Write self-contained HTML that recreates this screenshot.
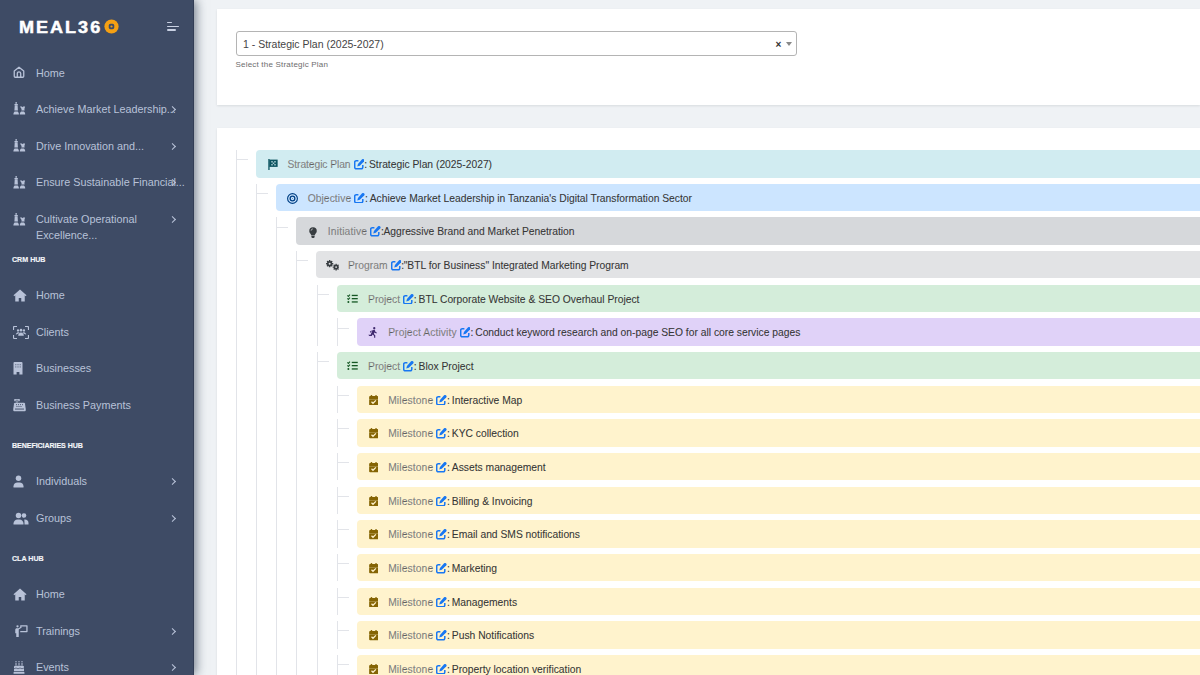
<!DOCTYPE html>
<html><head><meta charset="utf-8"><style>
*{box-sizing:border-box}
html,body{margin:0;padding:0}
body{width:1200px;height:675px;overflow:hidden;position:relative;background:#eff2f5;font-family:"Liberation Sans",sans-serif}
.a{position:absolute;white-space:nowrap}
#sb{position:absolute;left:0;top:0;width:193px;height:675px;background:#3e4b65;box-shadow:1px 0 0 #323d55, 3px 0 10px rgba(40,55,75,.62)}
.si{position:absolute;left:36px;font-size:10.8px;line-height:16px;color:#b8c2d8;white-space:nowrap}
.sic{position:absolute;left:13px;line-height:0}
.sh{position:absolute;left:12px;font-size:7.1px;font-weight:bold;line-height:10px;color:#eef1f6;white-space:nowrap;-webkit-text-stroke:.15px #fff}
.chev{position:absolute;left:169.5px;width:4.8px;height:4.8px;border-right:1.5px solid #b8c2d8;border-top:1.5px solid #b8c2d8;transform:rotate(45deg)}
.card{position:absolute;left:217px;width:983px;background:#fff}
.vl{position:absolute;width:1px;background:#e2e4e9}
.hl{position:absolute;height:1px;width:12px;background:#e2e4e9}
.row{position:absolute;height:27.5px;border-radius:4px;right:-10px}
.ric{position:absolute;left:11.5px;top:8px;line-height:0}
.rt{position:absolute;left:31.5px;top:0;line-height:27.5px;font-size:10.3px;color:#363636;white-space:nowrap;padding-top:1px;-webkit-text-stroke:.07px #363636}
.lab{color:#868686}
</style></head><body>

<div id="sb">
<div class="a" style="left:18.6px;top:16px;font-size:17.2px;font-weight:bold;letter-spacing:1.9px;color:#fff;line-height:22px;-webkit-text-stroke:.5px #fff;transform:scaleX(1.05);transform-origin:0 0">MEAL36</div>
<svg class="a" style="left:103.8px;top:18.8px" width="15" height="15" viewBox="0 0 30 30"><circle cx="15" cy="15" r="14.2" fill="#f5a013"/><rect x="9.5" y="9.5" width="11" height="11" rx="3.5" fill="#3e4b65"/><circle cx="15" cy="15" r="2.2" fill="#f5a013"/></svg>
<div class="a" style="left:166.8px;top:21.7px;width:5.4px;height:1.5px;background:#c9d1e3;border-radius:1px"></div>
<div class="a" style="left:166.8px;top:25.5px;width:12.6px;height:1.5px;background:#c9d1e3;border-radius:1px"></div>
<div class="a" style="left:166.8px;top:29.2px;width:9.2px;height:1.5px;background:#c9d1e3;border-radius:1px"></div>
<div class="si" style="top:64.50px">Home</div>
<div class="sic" style="top:66.30px"><svg width="12" height="12" viewBox="0 0 24 24"><path d="M2.5 10.2L12 2.3l9.5 7.9V20.5a2 2 0 0 1-2 2h-15a2 2 0 0 1-2-2z M8.6 22.2V15a3.4 3.4 0 0 1 6.8 0v7.2" fill="none" stroke="#b8c2d8" stroke-width="2.6" stroke-linejoin="round"/></svg></div>
<div class="si" style="top:100.50px">Achieve Market Leadership...</div>
<div class="sic" style="top:102.30px"><svg width="13" height="13" viewBox="0 0 26 26"><g fill="#b8c2d8"><circle cx="6.3" cy="1.9" r="1.7"/><rect x="2.8" y="3.8" width="7" height="2.6" rx=".8"/><path d="M3.5 6.6h5.6l.7 10.6H2.8z"/><path d="M.8 25c0-2.6 1-5.6 2.6-6.2h5.8c1.6.6 2.6 3.6 2.6 6.2z"/><path d="M13.8 8.8h4l1.2 1.6 1.2-1.6h4l-1.4 5.2.4 3.2h-6.4l.4-3.2z"/><path d="M13.6 25c0-2.6 1-5.6 2.6-6.2h5.6c1.6.6 2.6 3.6 2.6 6.2z"/></g></svg></div>
<div class="chev" style="top:106.50px"></div>
<div class="si" style="top:137.60px">Drive Innovation and...</div>
<div class="sic" style="top:139.40px"><svg width="13" height="13" viewBox="0 0 26 26"><g fill="#b8c2d8"><circle cx="6.3" cy="1.9" r="1.7"/><rect x="2.8" y="3.8" width="7" height="2.6" rx=".8"/><path d="M3.5 6.6h5.6l.7 10.6H2.8z"/><path d="M.8 25c0-2.6 1-5.6 2.6-6.2h5.8c1.6.6 2.6 3.6 2.6 6.2z"/><path d="M13.8 8.8h4l1.2 1.6 1.2-1.6h4l-1.4 5.2.4 3.2h-6.4l.4-3.2z"/><path d="M13.6 25c0-2.6 1-5.6 2.6-6.2h5.6c1.6.6 2.6 3.6 2.6 6.2z"/></g></svg></div>
<div class="chev" style="top:143.60px"></div>
<div class="si" style="top:173.90px">Ensure Sustainable Financial...</div>
<div class="sic" style="top:175.70px"><svg width="13" height="13" viewBox="0 0 26 26"><g fill="#b8c2d8"><circle cx="6.3" cy="1.9" r="1.7"/><rect x="2.8" y="3.8" width="7" height="2.6" rx=".8"/><path d="M3.5 6.6h5.6l.7 10.6H2.8z"/><path d="M.8 25c0-2.6 1-5.6 2.6-6.2h5.8c1.6.6 2.6 3.6 2.6 6.2z"/><path d="M13.8 8.8h4l1.2 1.6 1.2-1.6h4l-1.4 5.2.4 3.2h-6.4l.4-3.2z"/><path d="M13.6 25c0-2.6 1-5.6 2.6-6.2h5.6c1.6.6 2.6 3.6 2.6 6.2z"/></g></svg></div>
<div class="chev" style="top:179.90px"></div>
<div class="si" style="top:210.70px">Cultivate Operational<br>Excellence...</div>
<div class="sic" style="top:212.50px"><svg width="13" height="13" viewBox="0 0 26 26"><g fill="#b8c2d8"><circle cx="6.3" cy="1.9" r="1.7"/><rect x="2.8" y="3.8" width="7" height="2.6" rx=".8"/><path d="M3.5 6.6h5.6l.7 10.6H2.8z"/><path d="M.8 25c0-2.6 1-5.6 2.6-6.2h5.8c1.6.6 2.6 3.6 2.6 6.2z"/><path d="M13.8 8.8h4l1.2 1.6 1.2-1.6h4l-1.4 5.2.4 3.2h-6.4l.4-3.2z"/><path d="M13.6 25c0-2.6 1-5.6 2.6-6.2h5.6c1.6.6 2.6 3.6 2.6 6.2z"/></g></svg></div>
<div class="chev" style="top:216.70px"></div>
<div class="sh" style="top:255.30px;letter-spacing:0px">CRM HUB</div>
<div class="si" style="top:287.10px">Home</div>
<div class="sic" style="top:288.90px"><svg width="14" height="13" viewBox="0 0 28 26"><path d="M14 1L1 12.5l1.6 1.8L4.5 12.7V25h7v-7h5v7h7V12.7l1.9 1.6 1.6-1.8z" fill="#b8c2d8"/></svg></div>
<div class="si" style="top:323.90px">Clients</div>
<div class="sic" style="top:325.70px"><svg width="16" height="13" viewBox="0 0 32 26"><path d="M1 8V3a2 2 0 0 1 2-2h5M24 1h5a2 2 0 0 1 2 2v5M31 18v5a2 2 0 0 1-2 2h-5M8 25H3a2 2 0 0 1-2-2v-5" fill="none" stroke="#b8c2d8" stroke-width="2.4"/><circle cx="10" cy="9" r="2.3" fill="#b8c2d8"/><circle cx="16" cy="8.3" r="2.6" fill="#b8c2d8"/><circle cx="22" cy="9" r="2.3" fill="#b8c2d8"/><path d="M6.5 17c0-2.5 1.5-4 3.5-4s3 1 3 1M25.5 17c0-2.5-1.5-4-3.5-4s-3 1-3 1M11 19c0-3.3 2.2-5.5 5-5.5s5 2.2 5 5.5z" fill="#b8c2d8" stroke="#b8c2d8" stroke-width="1"/></svg></div>
<div class="si" style="top:360.20px">Businesses</div>
<div class="sic" style="top:362.00px"><svg width="10" height="13" viewBox="0 0 20 26"><path d="M1 2a2 2 0 0 1 2-2h14a2 2 0 0 1 2 2v23h-6.2v-5h-5.6v5H1z" fill="#b8c2d8"/><g fill="#3e4b65"><rect x="4.6" y="4.6" width="2" height="1.8"/><rect x="9" y="4.6" width="2" height="1.8"/><rect x="13.4" y="4.6" width="2" height="1.8"/><rect x="4.6" y="9" width="2" height="1.8"/><rect x="9" y="9" width="2" height="1.8"/><rect x="13.4" y="9" width="2" height="1.8"/></g></svg></div>
<div class="si" style="top:397.00px">Business Payments</div>
<div class="sic" style="top:398.80px"><svg width="13" height="13" viewBox="0 0 26 26"><rect x="2.5" y="0" width="11" height="4.6" rx="1.2" fill="#b8c2d8"/><rect x="5" y="1.6" width="6" height="1.4" fill="#3e4b65"/><rect x="7" y="4.6" width="2" height="3" fill="#b8c2d8"/><path d="M4 7.5h18c1 0 1.6.6 1.9 1.5L25.5 20v2.5a2 2 0 0 1-2 2H2.5a2 2 0 0 1-2-2V20L2.1 9c.3-.9.9-1.5 1.9-1.5z" fill="#b8c2d8"/><g fill="#3e4b65"><rect x="6" y="10.5" width="2" height="1.8"/><rect x="10" y="10.5" width="2" height="1.8"/><rect x="14" y="10.5" width="2" height="1.8"/><rect x="18" y="10.5" width="2" height="1.8"/><rect x="7" y="14" width="2" height="1.8"/><rect x="11" y="14" width="2" height="1.8"/><rect x="15" y="14" width="2" height="1.8"/><rect x="4" y="19.2" width="18" height="1.8"/></g></svg></div>
<div class="sh" style="top:441.20px;letter-spacing:-0.08px">BENEFICIARIES HUB</div>
<div class="si" style="top:472.90px">Individuals</div>
<div class="sic" style="top:474.70px"><svg width="11" height="13" viewBox="0 0 22 26"><circle cx="11" cy="6.5" r="5.5" fill="#b8c2d8"/><path d="M1 25v-2.5C1 18 4.5 15 9 15h4c4.5 0 8 3 8 7.5V25z" fill="#b8c2d8"/></svg></div>
<div class="chev" style="top:478.90px"></div>
<div class="si" style="top:509.90px">Groups</div>
<div class="sic" style="top:511.70px"><svg width="16" height="13" viewBox="0 0 32 26"><circle cx="11" cy="7" r="5.5" fill="#b8c2d8"/><path d="M1 25v-2c0-4.5 3.5-8 8-8h4c4.5 0 8 3.5 8 8v2z" fill="#b8c2d8"/><path d="M20 2.2a5.5 5.5 0 0 1 0 9.6A6.5 6.5 0 0 0 20 2.2z" fill="#b8c2d8"/><circle cx="22" cy="7" r="4.6" fill="#b8c2d8"/><path d="M22.5 15h1.5c4 0 7 3 7 7v3h-8v-3c0-2.7-.3-5-0.5-7z" fill="#b8c2d8"/></svg></div>
<div class="chev" style="top:515.90px"></div>
<div class="sh" style="top:554.20px;letter-spacing:0px">CLA HUB</div>
<div class="si" style="top:585.90px">Home</div>
<div class="sic" style="top:587.70px"><svg width="14" height="13" viewBox="0 0 28 26"><path d="M14 1L1 12.5l1.6 1.8L4.5 12.7V25h7v-7h5v7h7V12.7l1.9 1.6 1.6-1.8z" fill="#b8c2d8"/></svg></div>
<div class="si" style="top:622.90px">Trainings</div>
<div class="sic" style="top:624.70px"><svg width="16" height="13" viewBox="0 0 32 26"><circle cx="9" cy="2.6" r="2.3" fill="#b8c2d8"/><path d="M4.5 9.5c0-2 1.3-3.2 3.2-3.2h3.3l4.8-2.6 1 1.8-5.3 3.4V24H6.5v-7.5H4.5z" fill="#b8c2d8"/><path d="M14.5 0.5h13.5a1.2 1.2 0 0 1 1.2 1.2v11.5a1.2 1.2 0 0 1-1.2 1.2H14.5v-2.6h12.1V3.1H16.9v2.2h-2.4z" fill="#b8c2d8"/></svg></div>
<div class="chev" style="top:628.90px"></div>
<div class="si" style="top:659.20px">Events</div>
<div class="sic" style="top:661.00px"><svg width="12" height="13" viewBox="0 0 24 26"><g fill="#b8c2d8"><circle cx="6" cy="1.5" r="1.3"/><circle cx="12" cy="1.5" r="1.3"/><circle cx="18" cy="1.5" r="1.3"/><rect x="5" y="4" width="2" height="5"/><rect x="11" y="4" width="2" height="5"/><rect x="17" y="4" width="2" height="5"/><path d="M2 12a2.5 2.5 0 0 1 2.5-2.5h15A2.5 2.5 0 0 1 22 12v8.5H2z"/><rect x="1" y="21.8" width="22" height="3.6" rx="1"/></g><path d="M2 15.5c2 0 2-1.5 4-1.5s2 1.5 4 1.5 2-1.5 4-1.5 2 1.5 4 1.5 2-1.5 4-1.5" fill="none" stroke="#3e4b65" stroke-width="1.4"/></svg></div>
<div class="chev" style="top:665.20px"></div>
</div>
<div class="card" style="top:9px;height:96px;box-shadow:0 1px 2px rgba(56,65,74,.12)"></div>
<div class="card" style="top:127.6px;height:560px;box-shadow:0 1px 2px rgba(56,65,74,.12)"></div>
<div class="a" style="left:235.5px;top:31.2px;width:561.5px;height:24.6px;border:1px solid #b4b4b4;border-radius:3px;background:#fff"></div>
<div class="a" style="left:243px;top:35.5px;font-size:10.5px;line-height:16px;color:#444">1 - Strategic Plan (2025-2027)</div>
<div class="a" style="left:775.5px;top:37px;font-size:10px;line-height:16px;color:#333;font-weight:bold">&#215;</div>
<div class="a" style="left:786.2px;top:42px;width:0;height:0;border-left:3.5px solid transparent;border-right:3.5px solid transparent;border-top:4px solid #888"></div>
<div class="a" style="left:235.5px;top:60.3px;font-size:8px;line-height:10px;color:#6d6d6d;letter-spacing:.2px">Select the Strategic Plan</div>
<div class="vl" style="left:236.00px;top:150.00px;height:550.00px"></div>
<div class="hl" style="left:236.00px;top:159.20px"></div>
<div class="row" style="left:256.00px;top:150.00px;background:#d1ecf1"><div class="ric" style="left:11.7px;top:9.2px"><svg width="10" height="11" viewBox="0 0 20 22"><path d="M.6 0h2.6v22H.6z" fill="#0c5460"/><path d="M2.5 1.2h16.8v14.6H2.5z" fill="#0c5460"/><path d="M6.5 4h3v3h-3zM12.5 4h3v3h-3zM9.5 7h3v3h-3zM6.5 10h3v3h-3zM12.5 10h3v3h-3z" fill="#d1ecf1" opacity=".75"/></svg></div><div class="rt"><span class="lab" style="letter-spacing:-0.08px">Strategic Plan</span> <svg width="10.5" height="10.5" viewBox="0 0 21 21" style="vertical-align:-1.6px;margin-left:0.3px;margin-right:0.1px"><path d="M8.8 3.4H4.4a3 3 0 0 0-3 3v10.2a3 3 0 0 0 3 3h10.2a3 3 0 0 0 3-3v-4.4" fill="none" stroke="#1877f2" stroke-width="3"/><path d="M16.2 0.6a2.6 2.6 0 0 1 3.6 0l.6.6a2.6 2.6 0 0 1 0 3.6L11.6 13.6 6.5 15l1.4-5.1z" fill="#1877f2"/></svg><span style="letter-spacing:-.5px">: </span>Strategic Plan (2025-2027)</div></div>
<div class="vl" style="left:256.15px;top:183.66px;height:516.34px"></div>
<div class="hl" style="left:256.15px;top:192.86px"></div>
<div class="row" style="left:276.13px;top:183.66px;background:#cce5ff"><div class="ric" style="left:10.9px;top:9.0px"><svg width="11" height="11" viewBox="0 0 22 22"><circle cx="11" cy="11" r="9.8" fill="none" stroke="#004085" stroke-width="2.3"/><circle cx="11" cy="11" r="4.7" fill="none" stroke="#004085" stroke-width="2.7"/><circle cx="11" cy="11" r="1" fill="#004085" opacity=".6"/></svg></div><div class="rt"><span class="lab" style="letter-spacing:0.07px">Objective</span> <svg width="10.5" height="10.5" viewBox="0 0 21 21" style="vertical-align:-1.6px;margin-left:0.3px;margin-right:0.1px"><path d="M8.8 3.4H4.4a3 3 0 0 0-3 3v10.2a3 3 0 0 0 3 3h10.2a3 3 0 0 0 3-3v-4.4" fill="none" stroke="#1877f2" stroke-width="3"/><path d="M16.2 0.6a2.6 2.6 0 0 1 3.6 0l.6.6a2.6 2.6 0 0 1 0 3.6L11.6 13.6 6.5 15l1.4-5.1z" fill="#1877f2"/></svg><span style="letter-spacing:-.5px">: </span>Achieve Market Leadership in Tanzania's Digital Transformation Sector</div></div>
<div class="vl" style="left:276.30px;top:217.32px;height:482.68px"></div>
<div class="hl" style="left:276.30px;top:226.52px"></div>
<div class="row" style="left:296.26px;top:217.32px;background:#d6d8db"><div class="ric" style="left:12.4px;top:9.3px"><svg width="8" height="11" viewBox="0 0 16 22"><path d="M8 0.5a7.5 7.5 0 0 1 7.5 7.5c0 2.8-1.5 4.3-2.7 5.8-.9 1.1-1.3 2.2-1.4 3.2H4.6c-.1-1-.5-2.1-1.4-3.2C2 12.3.5 10.8.5 8A7.5 7.5 0 0 1 8 .5z" fill="#383d41"/><path d="M4.8 18h6.4v1.5a2.5 2.5 0 0 1-2.5 2.5H7.3a2.5 2.5 0 0 1-2.5-2.5z" fill="#383d41"/><path d="M4.2 7.5A3.8 3.8 0 0 1 8 3.7" stroke="#d6d8db" stroke-width="1.3" fill="none"/></svg></div><div class="rt"><span class="lab" style="letter-spacing:0.17px">Initiative</span> <svg width="10.5" height="10.5" viewBox="0 0 21 21" style="vertical-align:-1.6px;margin-left:0.3px;margin-right:0.1px"><path d="M8.8 3.4H4.4a3 3 0 0 0-3 3v10.2a3 3 0 0 0 3 3h10.2a3 3 0 0 0 3-3v-4.4" fill="none" stroke="#1877f2" stroke-width="3"/><path d="M16.2 0.6a2.6 2.6 0 0 1 3.6 0l.6.6a2.6 2.6 0 0 1 0 3.6L11.6 13.6 6.5 15l1.4-5.1z" fill="#1877f2"/></svg><span style="letter-spacing:-.5px">:</span>Aggressive Brand and Market Penetration</div></div>
<div class="vl" style="left:296.45px;top:250.98px;height:449.02px"></div>
<div class="hl" style="left:296.45px;top:260.18px"></div>
<div class="row" style="left:316.39px;top:250.98px;background:#e2e3e5"><div class="ric" style="left:9.4px;top:9.4px"><svg width="13.5" height="10.5" viewBox="0 0 27 21"><g fill="#383d41"><circle cx="7.3" cy="7.3" r="5.2"/><rect x="5.8" y="0" width="3" height="14.6" rx=".6"/><rect x="0" y="5.8" width="14.6" height="3" rx=".6"/><rect x="5.8" y="0" width="3" height="14.6" rx=".6" transform="rotate(45 7.3 7.3)"/><rect x="5.8" y="0" width="3" height="14.6" rx=".6" transform="rotate(-45 7.3 7.3)"/></g><circle cx="7.3" cy="7.3" r="2" fill="#e2e3e5"/><g fill="#383d41"><circle cx="20.2" cy="14.2" r="4.7"/><rect x="18.8" y="7.4" width="2.8" height="13.6" rx=".6"/><rect x="13.4" y="12.8" width="13.6" height="2.8" rx=".6"/><rect x="18.8" y="7.4" width="2.8" height="13.6" rx=".6" transform="rotate(45 20.2 14.2)"/><rect x="18.8" y="7.4" width="2.8" height="13.6" rx=".6" transform="rotate(-45 20.2 14.2)"/></g><circle cx="20.2" cy="14.2" r="1.8" fill="#e2e3e5"/></svg></div><div class="rt"><span class="lab" style="letter-spacing:0.03px">Program</span> <svg width="10.5" height="10.5" viewBox="0 0 21 21" style="vertical-align:-1.6px;margin-left:0.3px;margin-right:0.1px"><path d="M8.8 3.4H4.4a3 3 0 0 0-3 3v10.2a3 3 0 0 0 3 3h10.2a3 3 0 0 0 3-3v-4.4" fill="none" stroke="#1877f2" stroke-width="3"/><path d="M16.2 0.6a2.6 2.6 0 0 1 3.6 0l.6.6a2.6 2.6 0 0 1 0 3.6L11.6 13.6 6.5 15l1.4-5.1z" fill="#1877f2"/></svg><span style="letter-spacing:-.5px">:</span>"BTL for Business" Integrated Marketing Program</div></div>
<div class="vl" style="left:316.60px;top:284.64px;height:61.16px"></div>
<div class="hl" style="left:316.60px;top:293.84px"></div>
<div class="row" style="left:336.52px;top:284.64px;background:#d4edda"><div class="ric" style="left:10.7px;top:9.2px"><svg width="11" height="9.5" viewBox="0 0 22 19"><path d="M.8 2.8l1.9 1.9L6 1.2M.8 8.8l1.9 1.9L6 7.2" fill="none" stroke="#155724" stroke-width="2.2"/><circle cx="2.7" cy="16" r="2" fill="#155724"/><rect x="9.5" y="1.6" width="12" height="2.6" fill="#155724"/><rect x="9.5" y="8" width="12" height="2.6" fill="#155724"/><rect x="9.5" y="14.6" width="12" height="2.6" fill="#155724"/></svg></div><div class="rt"><span class="lab" style="letter-spacing:0.0px">Project</span> <svg width="10.5" height="10.5" viewBox="0 0 21 21" style="vertical-align:-1.6px;margin-left:0.3px;margin-right:0.1px"><path d="M8.8 3.4H4.4a3 3 0 0 0-3 3v10.2a3 3 0 0 0 3 3h10.2a3 3 0 0 0 3-3v-4.4" fill="none" stroke="#1877f2" stroke-width="3"/><path d="M16.2 0.6a2.6 2.6 0 0 1 3.6 0l.6.6a2.6 2.6 0 0 1 0 3.6L11.6 13.6 6.5 15l1.4-5.1z" fill="#1877f2"/></svg><span style="letter-spacing:-.5px">: </span>BTL Corporate Website &amp; SEO Overhaul Project</div></div>
<div class="vl" style="left:336.75px;top:318.30px;height:27.50px"></div>
<div class="hl" style="left:336.75px;top:327.50px"></div>
<div class="row" style="left:356.65px;top:318.30px;background:#e0d2f8"><div class="ric" style="left:11.1px;top:8.9px"><svg width="10" height="11" viewBox="0 0 20 22"><circle cx="12.5" cy="2.5" r="2.3" fill="#3f2a6e"/><path d="M7 7.5l4-1.6c1.5-.6 2.8.2 3.2 1.5l.9 2.5 2.6 1-.8 2-3.4-1.3-.5-1.3-1.3 3.8 2.8 2.6v5h-2.3v-4l-3.3-2.9-1.4 3.2-4.7.2L.5 15.6l4.7-.2 3.2-7.4-1.3.5-1.6 2.8L3.6 10.2 5.2 8z" fill="#3f2a6e"/></svg></div><div class="rt"><span class="lab" style="letter-spacing:0.1px">Project Activity</span> <svg width="10.5" height="10.5" viewBox="0 0 21 21" style="vertical-align:-1.6px;margin-left:0.3px;margin-right:0.1px"><path d="M8.8 3.4H4.4a3 3 0 0 0-3 3v10.2a3 3 0 0 0 3 3h10.2a3 3 0 0 0 3-3v-4.4" fill="none" stroke="#1877f2" stroke-width="3"/><path d="M16.2 0.6a2.6 2.6 0 0 1 3.6 0l.6.6a2.6 2.6 0 0 1 0 3.6L11.6 13.6 6.5 15l1.4-5.1z" fill="#1877f2"/></svg><span style="letter-spacing:-.5px">: </span>Conduct keyword research and on-page SEO for all core service pages</div></div>
<div class="vl" style="left:316.60px;top:351.96px;height:348.04px"></div>
<div class="hl" style="left:316.60px;top:361.16px"></div>
<div class="row" style="left:336.52px;top:351.96px;background:#d4edda"><div class="ric" style="left:10.7px;top:9.2px"><svg width="11" height="9.5" viewBox="0 0 22 19"><path d="M.8 2.8l1.9 1.9L6 1.2M.8 8.8l1.9 1.9L6 7.2" fill="none" stroke="#155724" stroke-width="2.2"/><circle cx="2.7" cy="16" r="2" fill="#155724"/><rect x="9.5" y="1.6" width="12" height="2.6" fill="#155724"/><rect x="9.5" y="8" width="12" height="2.6" fill="#155724"/><rect x="9.5" y="14.6" width="12" height="2.6" fill="#155724"/></svg></div><div class="rt"><span class="lab" style="letter-spacing:0.0px">Project</span> <svg width="10.5" height="10.5" viewBox="0 0 21 21" style="vertical-align:-1.6px;margin-left:0.3px;margin-right:0.1px"><path d="M8.8 3.4H4.4a3 3 0 0 0-3 3v10.2a3 3 0 0 0 3 3h10.2a3 3 0 0 0 3-3v-4.4" fill="none" stroke="#1877f2" stroke-width="3"/><path d="M16.2 0.6a2.6 2.6 0 0 1 3.6 0l.6.6a2.6 2.6 0 0 1 0 3.6L11.6 13.6 6.5 15l1.4-5.1z" fill="#1877f2"/></svg><span style="letter-spacing:-.5px">: </span>Blox Project</div></div>
<div class="vl" style="left:336.75px;top:385.62px;height:27.50px"></div>
<div class="hl" style="left:336.75px;top:394.82px"></div>
<div class="row" style="left:356.65px;top:385.62px;background:#fff3cd"><div class="ric" style="left:12.2px;top:9.1px"><svg width="9.5" height="10.5" viewBox="0 0 19 21"><rect x="3.6" y="0" width="2.6" height="4" rx=".8" fill="#856404"/><rect x="12.8" y="0" width="2.6" height="4" rx=".8" fill="#856404"/><path d="M0.3 4a2 2 0 0 1 2-2h14.4a2 2 0 0 1 2 2v3.8H.3z" fill="#856404"/><path d="M.3 8.6h18.4v10a2 2 0 0 1-2 2H2.3a2 2 0 0 1-2-2z" fill="#856404"/><path d="M5 13.6l3 3 5.8-5.8" fill="none" stroke="#fff3cd" stroke-width="2.5"/></svg></div><div class="rt"><span class="lab" style="letter-spacing:0.12px">Milestone</span> <svg width="10.5" height="10.5" viewBox="0 0 21 21" style="vertical-align:-1.6px;margin-left:0.3px;margin-right:0.1px"><path d="M8.8 3.4H4.4a3 3 0 0 0-3 3v10.2a3 3 0 0 0 3 3h10.2a3 3 0 0 0 3-3v-4.4" fill="none" stroke="#1877f2" stroke-width="3"/><path d="M16.2 0.6a2.6 2.6 0 0 1 3.6 0l.6.6a2.6 2.6 0 0 1 0 3.6L11.6 13.6 6.5 15l1.4-5.1z" fill="#1877f2"/></svg><span style="letter-spacing:-.5px">: </span>Interactive Map</div></div>
<div class="vl" style="left:336.75px;top:419.28px;height:27.50px"></div>
<div class="hl" style="left:336.75px;top:428.48px"></div>
<div class="row" style="left:356.65px;top:419.28px;background:#fff3cd"><div class="ric" style="left:12.2px;top:9.1px"><svg width="9.5" height="10.5" viewBox="0 0 19 21"><rect x="3.6" y="0" width="2.6" height="4" rx=".8" fill="#856404"/><rect x="12.8" y="0" width="2.6" height="4" rx=".8" fill="#856404"/><path d="M0.3 4a2 2 0 0 1 2-2h14.4a2 2 0 0 1 2 2v3.8H.3z" fill="#856404"/><path d="M.3 8.6h18.4v10a2 2 0 0 1-2 2H2.3a2 2 0 0 1-2-2z" fill="#856404"/><path d="M5 13.6l3 3 5.8-5.8" fill="none" stroke="#fff3cd" stroke-width="2.5"/></svg></div><div class="rt"><span class="lab" style="letter-spacing:0.12px">Milestone</span> <svg width="10.5" height="10.5" viewBox="0 0 21 21" style="vertical-align:-1.6px;margin-left:0.3px;margin-right:0.1px"><path d="M8.8 3.4H4.4a3 3 0 0 0-3 3v10.2a3 3 0 0 0 3 3h10.2a3 3 0 0 0 3-3v-4.4" fill="none" stroke="#1877f2" stroke-width="3"/><path d="M16.2 0.6a2.6 2.6 0 0 1 3.6 0l.6.6a2.6 2.6 0 0 1 0 3.6L11.6 13.6 6.5 15l1.4-5.1z" fill="#1877f2"/></svg><span style="letter-spacing:-.5px">: </span>KYC collection</div></div>
<div class="vl" style="left:336.75px;top:452.94px;height:27.50px"></div>
<div class="hl" style="left:336.75px;top:462.14px"></div>
<div class="row" style="left:356.65px;top:452.94px;background:#fff3cd"><div class="ric" style="left:12.2px;top:9.1px"><svg width="9.5" height="10.5" viewBox="0 0 19 21"><rect x="3.6" y="0" width="2.6" height="4" rx=".8" fill="#856404"/><rect x="12.8" y="0" width="2.6" height="4" rx=".8" fill="#856404"/><path d="M0.3 4a2 2 0 0 1 2-2h14.4a2 2 0 0 1 2 2v3.8H.3z" fill="#856404"/><path d="M.3 8.6h18.4v10a2 2 0 0 1-2 2H2.3a2 2 0 0 1-2-2z" fill="#856404"/><path d="M5 13.6l3 3 5.8-5.8" fill="none" stroke="#fff3cd" stroke-width="2.5"/></svg></div><div class="rt"><span class="lab" style="letter-spacing:0.12px">Milestone</span> <svg width="10.5" height="10.5" viewBox="0 0 21 21" style="vertical-align:-1.6px;margin-left:0.3px;margin-right:0.1px"><path d="M8.8 3.4H4.4a3 3 0 0 0-3 3v10.2a3 3 0 0 0 3 3h10.2a3 3 0 0 0 3-3v-4.4" fill="none" stroke="#1877f2" stroke-width="3"/><path d="M16.2 0.6a2.6 2.6 0 0 1 3.6 0l.6.6a2.6 2.6 0 0 1 0 3.6L11.6 13.6 6.5 15l1.4-5.1z" fill="#1877f2"/></svg><span style="letter-spacing:-.5px">: </span>Assets management</div></div>
<div class="vl" style="left:336.75px;top:486.60px;height:27.50px"></div>
<div class="hl" style="left:336.75px;top:495.80px"></div>
<div class="row" style="left:356.65px;top:486.60px;background:#fff3cd"><div class="ric" style="left:12.2px;top:9.1px"><svg width="9.5" height="10.5" viewBox="0 0 19 21"><rect x="3.6" y="0" width="2.6" height="4" rx=".8" fill="#856404"/><rect x="12.8" y="0" width="2.6" height="4" rx=".8" fill="#856404"/><path d="M0.3 4a2 2 0 0 1 2-2h14.4a2 2 0 0 1 2 2v3.8H.3z" fill="#856404"/><path d="M.3 8.6h18.4v10a2 2 0 0 1-2 2H2.3a2 2 0 0 1-2-2z" fill="#856404"/><path d="M5 13.6l3 3 5.8-5.8" fill="none" stroke="#fff3cd" stroke-width="2.5"/></svg></div><div class="rt"><span class="lab" style="letter-spacing:0.12px">Milestone</span> <svg width="10.5" height="10.5" viewBox="0 0 21 21" style="vertical-align:-1.6px;margin-left:0.3px;margin-right:0.1px"><path d="M8.8 3.4H4.4a3 3 0 0 0-3 3v10.2a3 3 0 0 0 3 3h10.2a3 3 0 0 0 3-3v-4.4" fill="none" stroke="#1877f2" stroke-width="3"/><path d="M16.2 0.6a2.6 2.6 0 0 1 3.6 0l.6.6a2.6 2.6 0 0 1 0 3.6L11.6 13.6 6.5 15l1.4-5.1z" fill="#1877f2"/></svg><span style="letter-spacing:-.5px">: </span>Billing &amp; Invoicing</div></div>
<div class="vl" style="left:336.75px;top:520.26px;height:27.50px"></div>
<div class="hl" style="left:336.75px;top:529.46px"></div>
<div class="row" style="left:356.65px;top:520.26px;background:#fff3cd"><div class="ric" style="left:12.2px;top:9.1px"><svg width="9.5" height="10.5" viewBox="0 0 19 21"><rect x="3.6" y="0" width="2.6" height="4" rx=".8" fill="#856404"/><rect x="12.8" y="0" width="2.6" height="4" rx=".8" fill="#856404"/><path d="M0.3 4a2 2 0 0 1 2-2h14.4a2 2 0 0 1 2 2v3.8H.3z" fill="#856404"/><path d="M.3 8.6h18.4v10a2 2 0 0 1-2 2H2.3a2 2 0 0 1-2-2z" fill="#856404"/><path d="M5 13.6l3 3 5.8-5.8" fill="none" stroke="#fff3cd" stroke-width="2.5"/></svg></div><div class="rt"><span class="lab" style="letter-spacing:0.12px">Milestone</span> <svg width="10.5" height="10.5" viewBox="0 0 21 21" style="vertical-align:-1.6px;margin-left:0.3px;margin-right:0.1px"><path d="M8.8 3.4H4.4a3 3 0 0 0-3 3v10.2a3 3 0 0 0 3 3h10.2a3 3 0 0 0 3-3v-4.4" fill="none" stroke="#1877f2" stroke-width="3"/><path d="M16.2 0.6a2.6 2.6 0 0 1 3.6 0l.6.6a2.6 2.6 0 0 1 0 3.6L11.6 13.6 6.5 15l1.4-5.1z" fill="#1877f2"/></svg><span style="letter-spacing:-.5px">: </span>Email and SMS notifications</div></div>
<div class="vl" style="left:336.75px;top:553.92px;height:27.50px"></div>
<div class="hl" style="left:336.75px;top:563.12px"></div>
<div class="row" style="left:356.65px;top:553.92px;background:#fff3cd"><div class="ric" style="left:12.2px;top:9.1px"><svg width="9.5" height="10.5" viewBox="0 0 19 21"><rect x="3.6" y="0" width="2.6" height="4" rx=".8" fill="#856404"/><rect x="12.8" y="0" width="2.6" height="4" rx=".8" fill="#856404"/><path d="M0.3 4a2 2 0 0 1 2-2h14.4a2 2 0 0 1 2 2v3.8H.3z" fill="#856404"/><path d="M.3 8.6h18.4v10a2 2 0 0 1-2 2H2.3a2 2 0 0 1-2-2z" fill="#856404"/><path d="M5 13.6l3 3 5.8-5.8" fill="none" stroke="#fff3cd" stroke-width="2.5"/></svg></div><div class="rt"><span class="lab" style="letter-spacing:0.12px">Milestone</span> <svg width="10.5" height="10.5" viewBox="0 0 21 21" style="vertical-align:-1.6px;margin-left:0.3px;margin-right:0.1px"><path d="M8.8 3.4H4.4a3 3 0 0 0-3 3v10.2a3 3 0 0 0 3 3h10.2a3 3 0 0 0 3-3v-4.4" fill="none" stroke="#1877f2" stroke-width="3"/><path d="M16.2 0.6a2.6 2.6 0 0 1 3.6 0l.6.6a2.6 2.6 0 0 1 0 3.6L11.6 13.6 6.5 15l1.4-5.1z" fill="#1877f2"/></svg><span style="letter-spacing:-.5px">: </span>Marketing</div></div>
<div class="vl" style="left:336.75px;top:587.58px;height:27.50px"></div>
<div class="hl" style="left:336.75px;top:596.78px"></div>
<div class="row" style="left:356.65px;top:587.58px;background:#fff3cd"><div class="ric" style="left:12.2px;top:9.1px"><svg width="9.5" height="10.5" viewBox="0 0 19 21"><rect x="3.6" y="0" width="2.6" height="4" rx=".8" fill="#856404"/><rect x="12.8" y="0" width="2.6" height="4" rx=".8" fill="#856404"/><path d="M0.3 4a2 2 0 0 1 2-2h14.4a2 2 0 0 1 2 2v3.8H.3z" fill="#856404"/><path d="M.3 8.6h18.4v10a2 2 0 0 1-2 2H2.3a2 2 0 0 1-2-2z" fill="#856404"/><path d="M5 13.6l3 3 5.8-5.8" fill="none" stroke="#fff3cd" stroke-width="2.5"/></svg></div><div class="rt"><span class="lab" style="letter-spacing:0.12px">Milestone</span> <svg width="10.5" height="10.5" viewBox="0 0 21 21" style="vertical-align:-1.6px;margin-left:0.3px;margin-right:0.1px"><path d="M8.8 3.4H4.4a3 3 0 0 0-3 3v10.2a3 3 0 0 0 3 3h10.2a3 3 0 0 0 3-3v-4.4" fill="none" stroke="#1877f2" stroke-width="3"/><path d="M16.2 0.6a2.6 2.6 0 0 1 3.6 0l.6.6a2.6 2.6 0 0 1 0 3.6L11.6 13.6 6.5 15l1.4-5.1z" fill="#1877f2"/></svg><span style="letter-spacing:-.5px">: </span>Managements</div></div>
<div class="vl" style="left:336.75px;top:621.24px;height:27.50px"></div>
<div class="hl" style="left:336.75px;top:630.44px"></div>
<div class="row" style="left:356.65px;top:621.24px;background:#fff3cd"><div class="ric" style="left:12.2px;top:9.1px"><svg width="9.5" height="10.5" viewBox="0 0 19 21"><rect x="3.6" y="0" width="2.6" height="4" rx=".8" fill="#856404"/><rect x="12.8" y="0" width="2.6" height="4" rx=".8" fill="#856404"/><path d="M0.3 4a2 2 0 0 1 2-2h14.4a2 2 0 0 1 2 2v3.8H.3z" fill="#856404"/><path d="M.3 8.6h18.4v10a2 2 0 0 1-2 2H2.3a2 2 0 0 1-2-2z" fill="#856404"/><path d="M5 13.6l3 3 5.8-5.8" fill="none" stroke="#fff3cd" stroke-width="2.5"/></svg></div><div class="rt"><span class="lab" style="letter-spacing:0.12px">Milestone</span> <svg width="10.5" height="10.5" viewBox="0 0 21 21" style="vertical-align:-1.6px;margin-left:0.3px;margin-right:0.1px"><path d="M8.8 3.4H4.4a3 3 0 0 0-3 3v10.2a3 3 0 0 0 3 3h10.2a3 3 0 0 0 3-3v-4.4" fill="none" stroke="#1877f2" stroke-width="3"/><path d="M16.2 0.6a2.6 2.6 0 0 1 3.6 0l.6.6a2.6 2.6 0 0 1 0 3.6L11.6 13.6 6.5 15l1.4-5.1z" fill="#1877f2"/></svg><span style="letter-spacing:-.5px">: </span>Push Notifications</div></div>
<div class="vl" style="left:336.75px;top:654.90px;height:45.10px"></div>
<div class="hl" style="left:336.75px;top:664.10px"></div>
<div class="row" style="left:356.65px;top:654.90px;background:#fff3cd"><div class="ric" style="left:12.2px;top:9.1px"><svg width="9.5" height="10.5" viewBox="0 0 19 21"><rect x="3.6" y="0" width="2.6" height="4" rx=".8" fill="#856404"/><rect x="12.8" y="0" width="2.6" height="4" rx=".8" fill="#856404"/><path d="M0.3 4a2 2 0 0 1 2-2h14.4a2 2 0 0 1 2 2v3.8H.3z" fill="#856404"/><path d="M.3 8.6h18.4v10a2 2 0 0 1-2 2H2.3a2 2 0 0 1-2-2z" fill="#856404"/><path d="M5 13.6l3 3 5.8-5.8" fill="none" stroke="#fff3cd" stroke-width="2.5"/></svg></div><div class="rt"><span class="lab" style="letter-spacing:0.12px">Milestone</span> <svg width="10.5" height="10.5" viewBox="0 0 21 21" style="vertical-align:-1.6px;margin-left:0.3px;margin-right:0.1px"><path d="M8.8 3.4H4.4a3 3 0 0 0-3 3v10.2a3 3 0 0 0 3 3h10.2a3 3 0 0 0 3-3v-4.4" fill="none" stroke="#1877f2" stroke-width="3"/><path d="M16.2 0.6a2.6 2.6 0 0 1 3.6 0l.6.6a2.6 2.6 0 0 1 0 3.6L11.6 13.6 6.5 15l1.4-5.1z" fill="#1877f2"/></svg><span style="letter-spacing:-.5px">: </span>Property location verification</div></div>
</body></html>
